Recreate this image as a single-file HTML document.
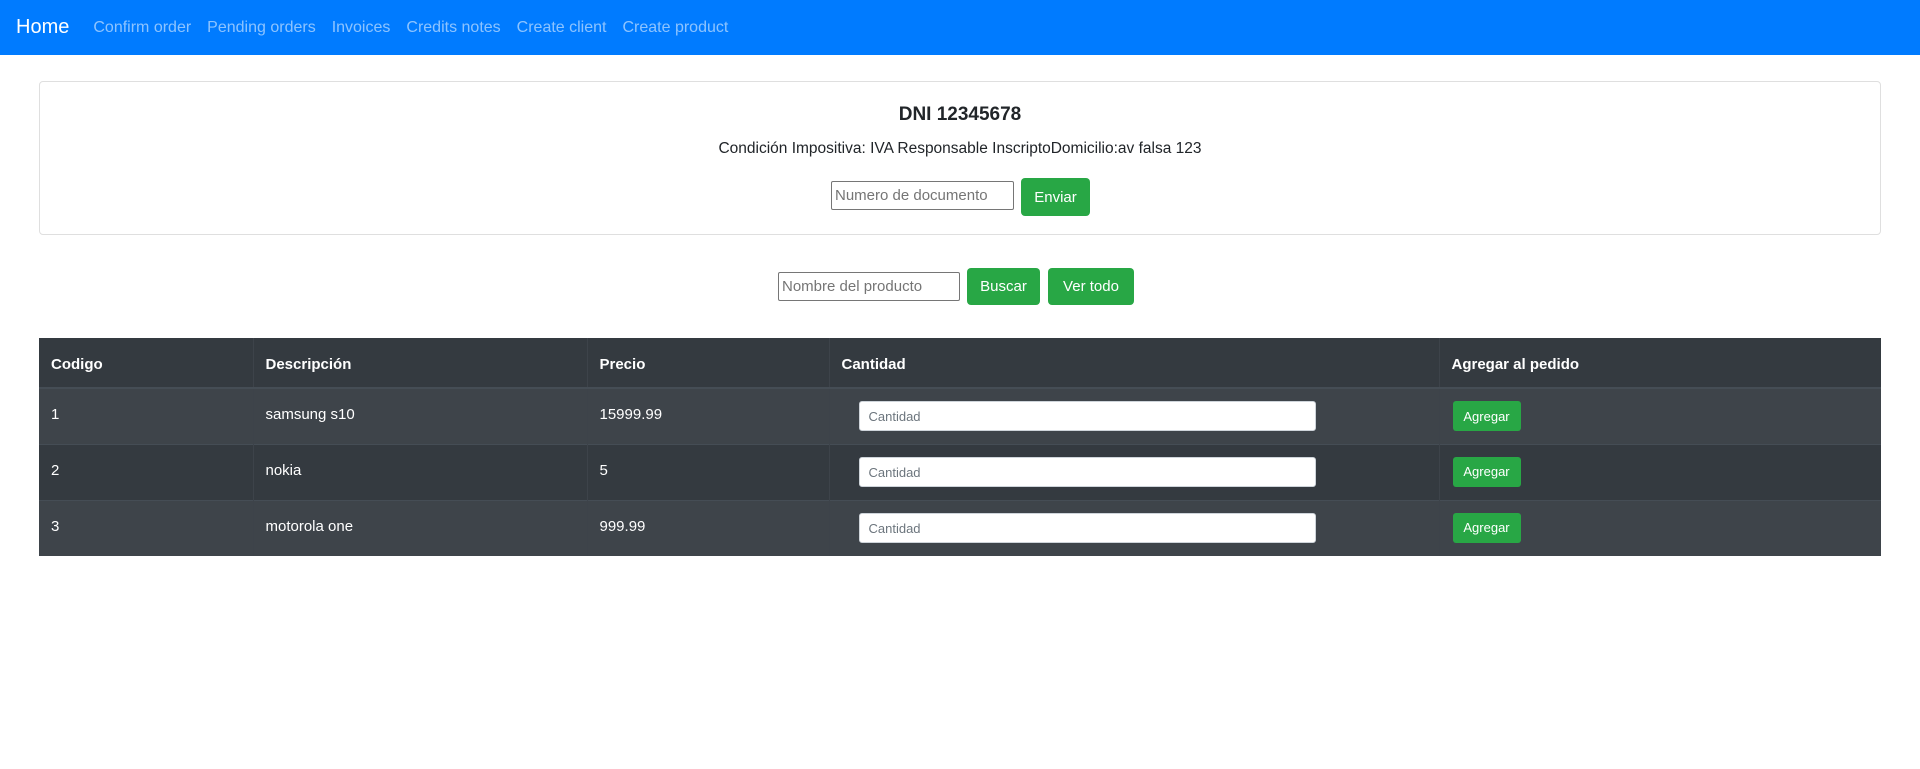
<!DOCTYPE html>
<html><head><meta charset="utf-8"><style>
*{box-sizing:border-box}
body{margin:0;font-family:"Liberation Sans",sans-serif;font-size:16px;color:#212529;background:#fff;width:1920px;height:769px;overflow:hidden}
.nav{height:55px;background:#007bff;display:flex;align-items:center;padding-left:16px}
.brand{color:#fff;font-size:20px;margin-right:16px}
.nav a{color:rgba(255,255,255,.55);padding:0 8px;font-size:16px;text-decoration:none}
.card{position:absolute;left:39px;top:81px;width:1842px;height:154px;border:1px solid #dfdfdf;border-radius:4px;text-align:center}
h5{margin:0;position:absolute;top:22px;width:100%;font-size:19px;font-weight:bold}
.cond{position:absolute;top:58px;width:100%;font-size:15.5px}
.inp{position:absolute;border:1px solid #767676;height:29px;font-size:15px;color:#757575;padding:0 3px;line-height:27px;border-radius:2px;text-align:left;background:#fff}
.btn{position:absolute;background:#28a745;color:#fff;border-radius:4px;font-size:15px;display:flex;align-items:center;justify-content:center}
table{position:absolute;left:39px;top:338px;width:1842px;border-collapse:collapse;color:#fff;font-size:15px}
td,th{text-align:left;padding:0 12px;border-top:1px solid #454d55;vertical-align:middle}
th{height:50px;background:#343a40;border-bottom:2px solid #454d55;border-top:none;padding-top:4px}
td{height:56px;position:relative;padding-bottom:4px}
tr.o td{background:#3e444a}tr.e td{background:#343a40}
td+td,th+th{border-left:1px solid #3d434a}
.ci{position:absolute;left:29px;top:12px;width:457px;height:30px;background:#fff;border:1px solid #ced4da;border-radius:3px;color:#6c757d;font-size:13px;padding:7px 9px}
.ab{position:absolute;left:13px;top:12px;width:68px;height:30px;background:#28a745;border-radius:3px;font-size:13px;display:flex;align-items:center;justify-content:center}
</style></head><body>
<div class="nav"><span class="brand">Home</span><a>Confirm order</a><a>Pending orders</a><a>Invoices</a><a>Credits notes</a><a>Create client</a><a>Create product</a></div>
<div class="card">
<h5>DNI 12345678</h5>
<div class="cond">Condición Impositiva: IVA Responsable InscriptoDomicilio:av falsa 123</div>
<div class="inp" style="left:791px;top:99px;width:183px">Numero de documento</div>
<div class="btn" style="left:981px;top:96px;width:69px;height:38px">Enviar</div>
</div>
<div class="inp" style="left:778px;top:272px;width:182px">Nombre del producto</div>
<div class="btn" style="left:967px;top:268px;width:73px;height:37px">Buscar</div>
<div class="btn" style="left:1048px;top:268px;width:86px;height:37px">Ver todo</div>
<table>
<tr><th style="width:214px">Codigo</th><th style="width:334px">Descripción</th><th style="width:242px">Precio</th><th style="width:610px">Cantidad</th><th>Agregar al pedido</th></tr>
<tr class="o"><td>1</td><td>samsung s10</td><td>15999.99</td><td><div class="ci">Cantidad</div></td><td><div class="ab">Agregar</div></td></tr>
<tr class="e"><td>2</td><td>nokia</td><td>5</td><td><div class="ci">Cantidad</div></td><td><div class="ab">Agregar</div></td></tr>
<tr class="o"><td>3</td><td>motorola one</td><td>999.99</td><td><div class="ci">Cantidad</div></td><td><div class="ab">Agregar</div></td></tr>
</table>
</body></html>
